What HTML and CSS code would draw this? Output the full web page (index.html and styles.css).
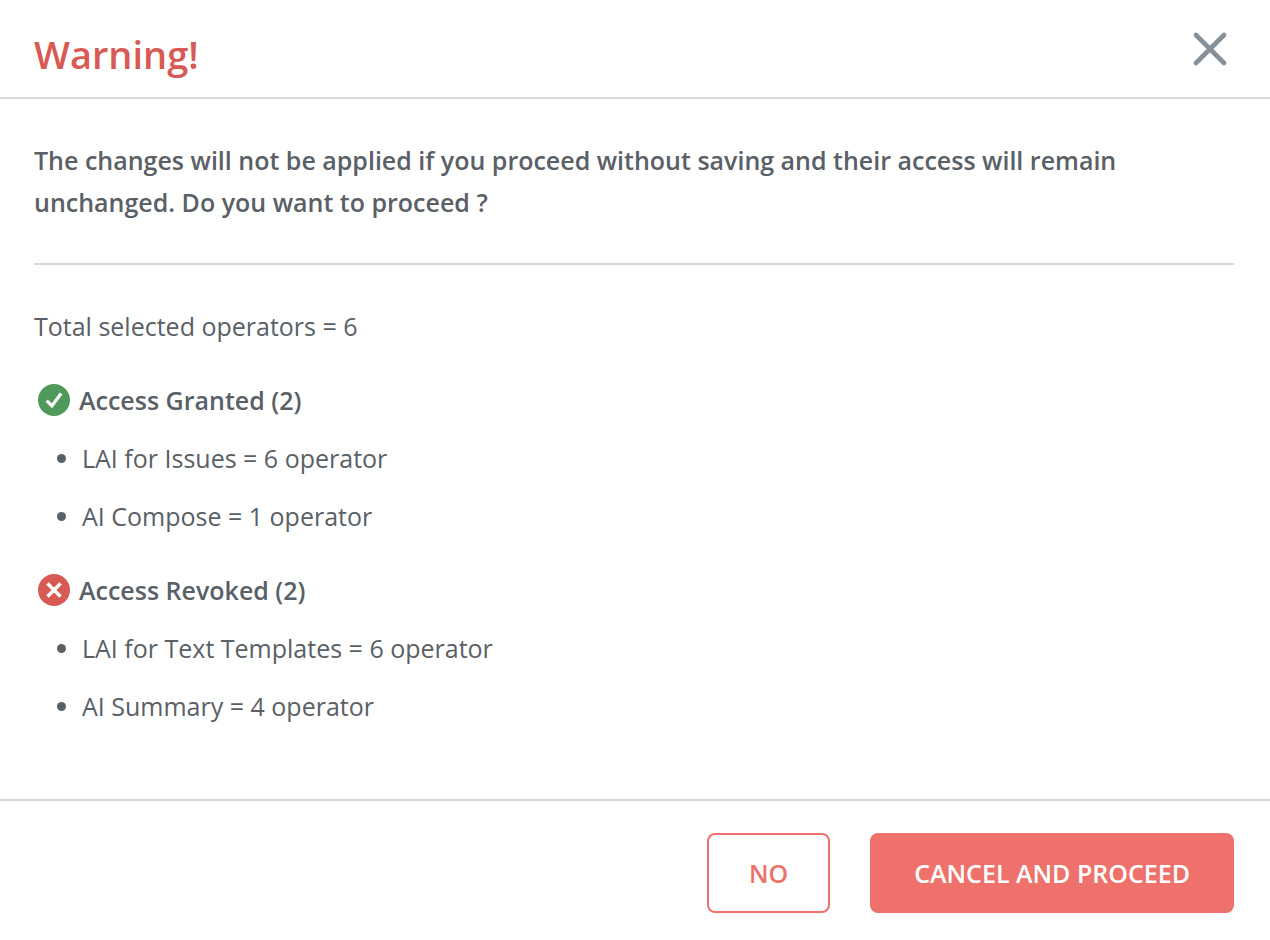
FILE: index.html
```html
<!DOCTYPE html>
<html lang="en">
<head>
<meta charset="utf-8">
<title>Warning</title>
<link rel="stylesheet" href="styles.css">
</head>
<body>
<main class="dialog" role="dialog" aria-labelledby="dialog-title">
  <header class="dialog-header">
    <h1 class="dialog-title" id="dialog-title">Warning!</h1>
    <button class="close" type="button" aria-label="Close">
      <svg class="close-icon" viewBox="0 0 34 34"><path d="M3 3 31 31M31 3 3 31" fill="none" stroke="currentColor" stroke-width="4.600" stroke-linecap="round"/></svg>
    </button>
  </header>
  <section class="dialog-body">
    <p class="message">The changes will not be applied if you proceed without saving and their access will remain unchanged. Do you want to proceed ?</p>
    <hr class="divider">
    <p class="total">Total selected operators = 6</p>
    <h2 class="group-title">
      <svg class="status" viewBox="0 0 32 32"><circle cx="16" cy="16" r="16" fill="#4f9a5b"/><path d="M8.700 16.700l5.200 5.200L23.100 9.500" fill="none" stroke="#fff" stroke-width="3.200"/></svg>
      Access Granted (2)
    </h2>
    <ul class="items">
      <li>LAI for Issues = 6 operator</li>
      <li>AI Compose = 1 operator</li>
    </ul>
    <h2 class="group-title">
      <svg class="status" viewBox="0 0 32 32"><circle cx="16" cy="16" r="16" fill="#d75a54"/><path d="M9.500 9.500l13 13M22.500 9.500l-13 13" fill="none" stroke="#fff" stroke-width="3.400"/></svg>
      Access Revoked (2)
    </h2>
    <ul class="items">
      <li>LAI for Text Templates = 6 operator</li>
      <li>AI Summary = 4 operator</li>
    </ul>
  </section>
  <footer class="dialog-footer">
    <button class="button button-outline" type="button">NO</button>
    <button class="button button-solid" type="button">CANCEL AND PROCEED</button>
  </footer>
</main>
</body>
</html>
```
FILE: styles.css
```css
* { box-sizing: border-box; }
body {
  margin: 0;
  background: #fff;
  color: #596066;
  font-family: "Open Sans", "Noto Sans", sans-serif;
  font-size: 25px;
  line-height: 42px;
}
.dialog { min-height: 100vh; display: flex; flex-direction: column; }
.dialog-header {
  display: flex;
  justify-content: space-between;
  align-items: flex-start;
  padding: 29px 43px 18px 34px;
  border-bottom: 2px solid #d8d8d8;
}
.dialog-title { margin: 0; color: #d75a54; font-size: 38px; line-height: 50px; font-weight: 600; }
.close { display: flex; padding: 3px 0; border: 0; background: none; color: #859198; cursor: pointer; }
.close-icon { width: 34px; height: 34px; }
.dialog-body { flex: 1; padding: 40px 36px 36px 34px; }
.message { margin: 0; font-weight: 600; }
.divider { margin: 40px 0; border: 0; border-top: 2px solid #d8d8d8; }
.total { margin: 0 0 32px; }
.group-title {
  display: flex;
  align-items: center;
  gap: 9px;
  margin: 0 0 16px;
  padding-left: 4px;
  font-size: 25px;
  font-weight: 600;
}
.status { width: 32px; height: 32px; }
.items { display: grid; gap: 16px; margin: 0 0 32px; padding-left: 48px; }
.dialog-footer {
  display: flex;
  justify-content: flex-end;
  gap: 40px;
  padding: 32px 36px 27px;
  border-top: 2px solid #d8d8d8;
}
.button {
  height: 80px;
  padding: 0 40px;
  border: 2px solid #ee716b;
  border-radius: 8px;
  font: inherit;
  font-weight: 600;
  cursor: pointer;
}
.button-outline { background: #fff; color: #ee716b; }
.button-solid { padding: 0 42px; background: #ee716b; color: #fff; }
```
